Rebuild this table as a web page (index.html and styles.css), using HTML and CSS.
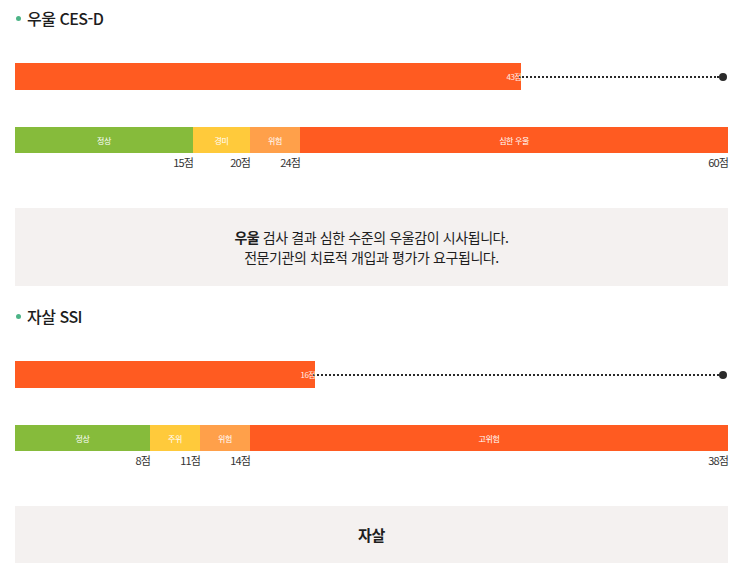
FILE: index.html
```html
<!DOCTYPE html>
<html lang="ko">
<head>
<meta charset="utf-8">
<link rel="stylesheet" href="styles.css">
</head>
<body>
<div class="page">
  <section class="section">
    <h2 class="title"><span class="bullet"></span>우울 CES-D</h2>
    <div class="score-row">
      <div class="fill" style="width:70.97%"><span class="score">43점</span></div>
      <div class="dots"></div>
      <div class="end"></div>
    </div>
    <div class="scale">
      <div class="seg green" style="width:178px">정상</div>
      <div class="seg yellow" style="width:57px">경미</div>
      <div class="seg orange" style="width:50px">위험</div>
      <div class="seg red seg-last">심한 우울</div>
    </div>
    <div class="ticks">
      <div class="tick" style="width:178px">15점</div>
      <div class="tick" style="width:57px">20점</div>
      <div class="tick" style="width:50px">24점</div>
      <div class="tick seg-last">60점</div>
    </div>
    <div class="message">
      <p><strong>우울</strong> 검사 결과 심한 수준의 우울감이 시사됩니다.</p>
      <p>전문기관의 치료적 개입과 평가가 요구됩니다.</p>
    </div>
  </section>
  <section class="section second">
    <h2 class="title"><span class="bullet"></span>자살 SSI</h2>
    <div class="score-row">
      <div class="fill" style="width:42.08%"><span class="score">16점</span></div>
      <div class="dots"></div>
      <div class="end"></div>
    </div>
    <div class="scale">
      <div class="seg green" style="width:135px">정상</div>
      <div class="seg yellow" style="width:50px">주위</div>
      <div class="seg orange" style="width:50px">위험</div>
      <div class="seg red seg-last">고위험</div>
    </div>
    <div class="ticks">
      <div class="tick" style="width:135px">8점</div>
      <div class="tick" style="width:50px">11점</div>
      <div class="tick" style="width:50px">14점</div>
      <div class="tick seg-last">38점</div>
    </div>
    <div class="message short">
      <p><strong>자살</strong></p>
    </div>
  </section>
</div>
</body>
</html>
```

FILE: styles.css
```css
* { box-sizing: border-box; }
html, body { margin: 0; padding: 0; background: #fff; }
body {
  font-family: "Noto Sans CJK KR", "Noto Sans", sans-serif;
  color: #222;
}
.page {
  width: 713px;
  margin-left: 15px;
  padding-top: 8px;
}
.section.second { margin-top: 20px; }
.title {
  margin: 0;
  height: 20px;
  line-height: 20px;
  font-size: 16px;
  font-weight: 500;
  letter-spacing: -0.5px;
  display: flex;
  align-items: center;
  color: #1d1d1d;
}
.bullet {
  width: 5px;
  height: 5px;
  border-radius: 50%;
  background: #4db487;
  margin: 0 6px 0 1px;
  flex: none;
}
.score-row {
  margin-top: 35px;
  height: 27px;
  display: flex;
  align-items: center;
}
.fill {
  height: 27px;
  background: #ff5b21;
  display: flex;
  align-items: center;
  justify-content: flex-end;
  flex: none;
}
.score {
  color: #fff;
  font-size: 8px;
  letter-spacing: -0.6px;
  opacity: 0.9;
}
.dots {
  flex: 1;
  margin-left: -2px;
  border-top: 2px dotted #2a2a2a;
  height: 0;
}
.end {
  width: 8px;
  height: 8px;
  border-radius: 50%;
  background: #2a2a2a;
  flex: none;
  margin-right: 1px;
}
.scale {
  margin-top: 37px;
  height: 26px;
  display: flex;
}
.seg {
  flex: none;
  display: flex;
  align-items: center;
  justify-content: center;
  color: #fff;
  font-size: 8px;
  letter-spacing: -0.4px;
}
.seg-last { flex: 1; }
.green { background: #86bb3b; }
.yellow { background: #ffca3b; }
.orange { background: #ffa04a; }
.red { background: #ff5b21; }
.ticks {
  display: flex;
  height: 18px;
}
.tick {
  flex: none;
  text-align: right;
  font-size: 11px;
  line-height: 18px;
  letter-spacing: -0.9px;
  color: #333;
}
.ticks .seg-last { flex: 1; }
.message {
  margin-top: 37px;
  background: #f4f1f0;
  padding: 19px 0;
  text-align: center;
  font-size: 14px;
  line-height: 20px;
  letter-spacing: -0.4px;
  color: #1e1e1e;
}
.message p { margin: 0; }
.message strong { font-weight: 700; }
.message.short {
  padding: 0;
  height: 57px;
  display: flex;
  align-items: center;
  justify-content: center;
  font-size: 15px;
}
```
